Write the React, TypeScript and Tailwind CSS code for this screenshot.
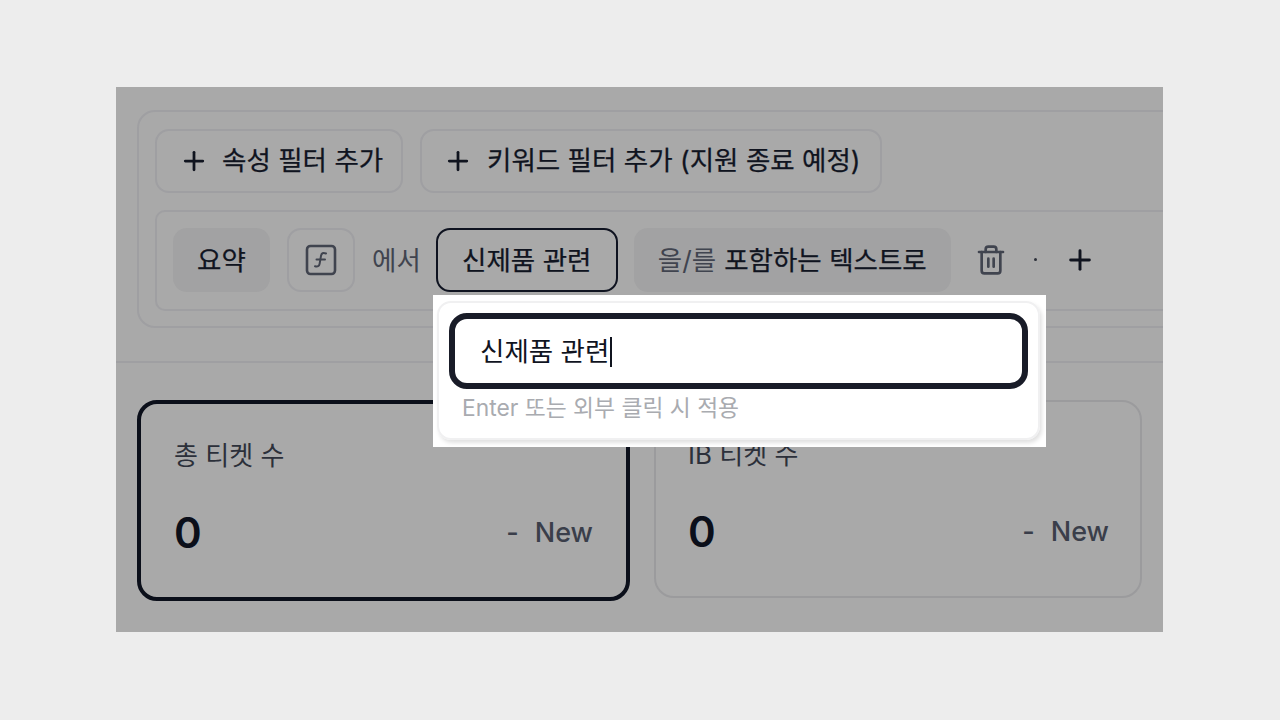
import { Plus, Trash2 } from 'lucide-react';

function FilterButton({ label, className, labelClassName }: { label: string; className: string; labelClassName: string }) {
  return (
    <button className={`flex h-[64px] shrink-0 items-center rounded-[14px] border-2 border-[#9f9fa2] ${className}`}>
      <Plus className="h-[30px] w-[30px] shrink-0 text-[#10141f]" strokeWidth={2.2} />
      <span className={`whitespace-nowrap text-[26.5px] text-[#10141f] [-webkit-text-stroke:0.25px_#10141f] ${labelClassName}`}>{label}</span>
    </button>
  );
}

function StatCard({ title, active, className }: { title: string; active?: boolean; className: string }) {
  return (
    <div
      className={`flex flex-col ${className} ${
        active ? 'rounded-[20px] border-[4px] border-[#0b0f1a]' : 'rounded-[20px] border-2 border-[#9b9b9d]'
      }`}
    >
      <div className="text-[26px] leading-[36px] text-[#2c303a]">{title}</div>
      <div className="mt-[35px] flex items-center justify-between">
        <span className="text-[42px] font-semibold leading-[48px] text-[#0b0f1a]">0</span>
        <span className="flex items-center gap-[16px] text-[27px] font-medium text-[#3a3e4a]">
          <span>-</span>
          <span>New</span>
        </span>
      </div>
    </div>
  );
}

export default function App() {
  return (
    <div
      className="flex h-[720px] w-[1280px] items-start overflow-hidden bg-[#ededed] pl-[116px] pt-[87px]"
      style={{ fontFamily: 'Inter, "Noto Sans CJK KR", sans-serif' }}
    >
      <div className="relative h-[545px] w-[1047px] overflow-hidden bg-[#a9a9a9]">
        <div className="pl-[21px] pt-[23px]">
          {/* filter card runs past the right edge */}
          <div className="h-[218px] w-[1100px] rounded-[18px] border-2 border-[#9f9fa2] pl-[16px] pt-[17px]">
            <div className="flex gap-[17px]">
              <FilterButton label="속성 필터 추가" className="w-[248px] pl-[22px]" labelClassName="ml-[13px]" />
              <FilterButton label="키워드 필터 추가 (지원 종료 예정)" className="w-[462px] pl-[21px]" labelClassName="ml-[14px]" />
            </div>
            <div className="mt-[17px] flex h-[101px] items-center rounded-l-[10px] border-2 border-[#9f9fa2] pb-[2px] pl-[16px]">
              <div className="flex h-[64px] w-[97px] items-center justify-center rounded-[14px] bg-[#a2a2a3] pt-[2px] text-[26.5px] text-[#10141f] [-webkit-text-stroke:0.25px_#10141f]">
                요약
              </div>
              <div className="ml-[17px] flex h-[64px] w-[68px] items-center justify-center rounded-[14px] border-2 border-[#9f9fa2]">
                <svg width="32" height="32" viewBox="0 0 32 32" fill="none" stroke="#40444f" strokeWidth="2.6">
                  <rect x="2" y="2" width="28" height="28" rx="3.5" />
                  <path d="M21 9.5c-3-1.2-4.6-.2-5 2.3l-1.4 8c-.4 2.4-2 3.2-4.6 2.4" strokeLinecap="round" strokeWidth="2" />
                  <path d="M11.5 15.5h8.5" strokeLinecap="round" strokeWidth="2" />
                </svg>
              </div>
              <span className="ml-[17px] pt-[2px] text-[26.5px] text-[#40444f]">에서</span>
              <div className="ml-[15px] flex h-[64px] w-[182px] items-center justify-center rounded-[14px] border-2 border-[#0f1320] pt-[2px] text-[26.5px] text-[#10141f] [-webkit-text-stroke:0.25px_#10141f]">
                신제품 관련
              </div>
              <div className="ml-[16px] flex h-[64px] w-[317px] items-center justify-center rounded-[14px] bg-[#a2a2a3] pt-[2px] text-[26.5px] text-[#10141f]">
                <span className="text-[#40444f]">을/를</span>
                <span className="ml-[8px] [-webkit-text-stroke:0.25px_#10141f]">포함하는 텍스트로</span>
              </div>
              <Trash2 className="ml-[24px] h-[32px] w-[32px] text-[#40444f]" strokeWidth={2} />
              <span className="ml-[27px] h-[3px] w-[3px] rounded-full bg-[#2c303a]" />
              <Plus className="ml-[27px] h-[32px] w-[32px] text-[#10141f]" strokeWidth={2.2} />
            </div>
          </div>
        </div>
        <div className="mt-[33px] h-[2px] w-full bg-[#9f9fa2]" />
        <div className="mt-[37px] flex items-start pl-[21px]">
          <StatCard title="총 티켓 수" active className="h-[201px] w-[493px] pl-[33px] pr-[33px] pt-[34px]" />
          <StatCard title="IB 티켓 수" className="ml-[24px] mt-0 h-[198px] w-[488px] pl-[32px] pr-[31px] pt-[35px]" />
        </div>

        {/* edit popover */}
        <div className="absolute left-[317px] top-[208px] h-[152px] w-[613px] bg-white pl-[4px] pr-[6px] pt-[6px]">
          <div className="h-[139px] rounded-[14px] border-2 border-[#f0f0f1] pl-[10px] pr-[10px] pt-[10px] shadow-[2px_3px_4px_rgba(0,0,0,0.12)]">
            <div className="flex h-[76px] items-center rounded-[18px] border-[6px] border-[#191c28] pb-[0px] pl-[25px] pt-[2px] text-[26.5px] text-[#10141f]">
              신제품 관련
              <span className="ml-[1px] h-[30px] w-[2px] bg-[#10141f]" />
            </div>
            <div className="ml-[13px] mt-[2px] text-[22.8px] leading-[34px] text-[#a9abb0]">Enter 또는 외부 클릭 시 적용</div>
          </div>
        </div>
      </div>
    </div>
  );
}
